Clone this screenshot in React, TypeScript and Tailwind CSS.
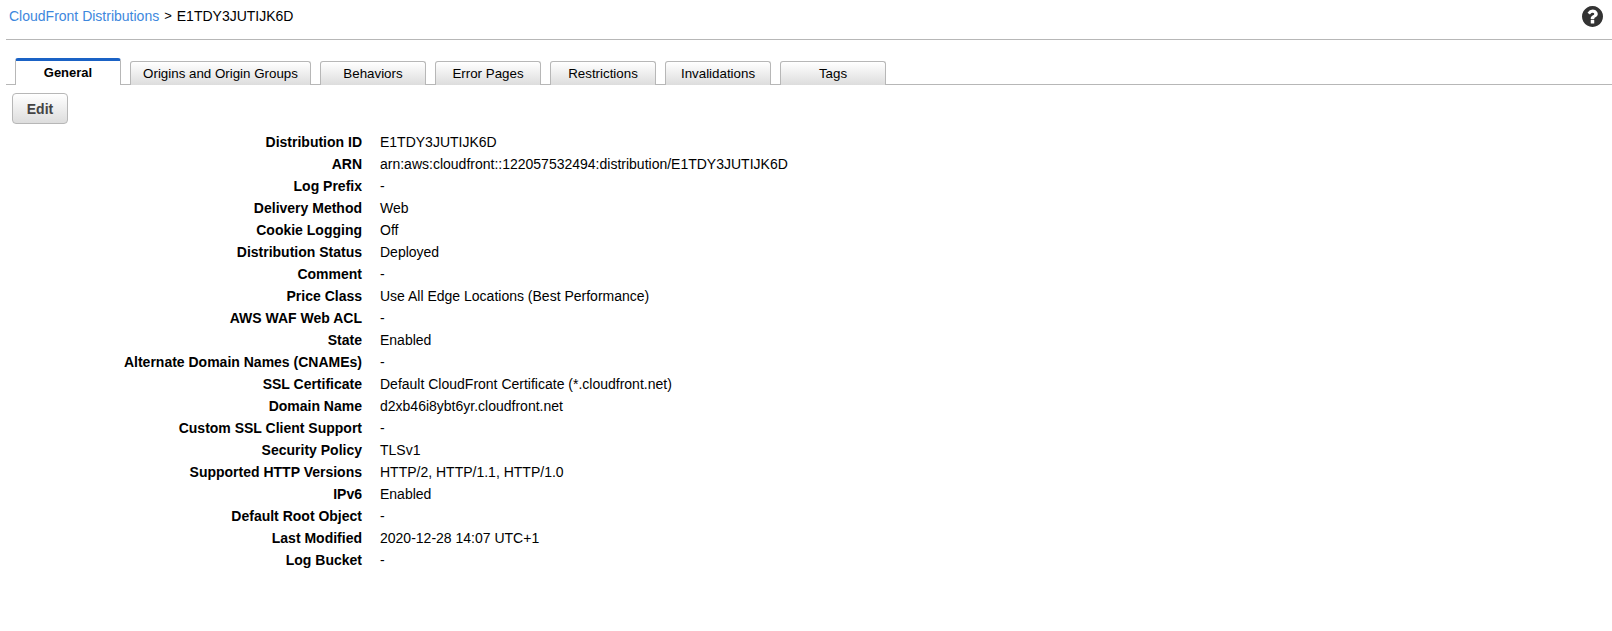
const tabs = ["Origins and Origin Groups", "Behaviors", "Error Pages", "Restrictions", "Invalidations", "Tags"];

const details: [string, string][] = [
  ["Distribution ID", "E1TDY3JUTIJK6D"],
  ["ARN", "arn:aws:cloudfront::122057532494:distribution/E1TDY3JUTIJK6D"],
  ["Log Prefix", "-"],
  ["Delivery Method", "Web"],
  ["Cookie Logging", "Off"],
  ["Distribution Status", "Deployed"],
  ["Comment", "-"],
  ["Price Class", "Use All Edge Locations (Best Performance)"],
  ["AWS WAF Web ACL", "-"],
  ["State", "Enabled"],
  ["Alternate Domain Names (CNAMEs)", "-"],
  ["SSL Certificate", "Default CloudFront Certificate (*.cloudfront.net)"],
  ["Domain Name", "d2xb46i8ybt6yr.cloudfront.net"],
  ["Custom SSL Client Support", "-"],
  ["Security Policy", "TLSv1"],
  ["Supported HTTP Versions", "HTTP/2, HTTP/1.1, HTTP/1.0"],
  ["IPv6", "Enabled"],
  ["Default Root Object", "-"],
  ["Last Modified", "2020-12-28 14:07 UTC+1"],
  ["Log Bucket", "-"],
];

function HelpIcon() {
  return (
    <svg viewBox="128 128 1536 1536" className="h-[21px] w-[21px]" fill="#333333">
      <path d="M1024 1376v-192q0-14-9-23t-23-9h-192q-14 0-23 9t-9 23v192q0 14 9 23t23 9h192q14 0 23-9t9-23zm256-672q0-88-55.5-163t-138.5-116-170-41q-243 0-371 213-15 24 8 42l132 100q7 6 19 6 16 0 25-12 53-68 86-92 34-24 86-24 48 0 85.5 26t37.5 59q0 38-20 61t-68 45q-63 28-115.5 86.5t-52.5 125.5v36q0 14 9 23t23 9h192q14 0 23-9t9-23q0-19 21.5-49.5t54.5-49.5q32-18 49-28.5t46-35 44.5-48 28-60.5 12.5-81zm384 192q0 209-103 385.5t-279.5 279.5-385.5 103-385.5-103-279.5-279.5-103-385.5 103-385.5 279.5-279.5 385.5-103 385.5 103 279.5 279.5 103 385.5z" />
    </svg>
  );
}

export default function App() {
  return (
    <div className="min-h-screen bg-white pl-1.5 font-['Liberation_Sans',Arial,sans-serif] text-sm text-black">
      <header className="flex h-10 items-start justify-between border-b border-[#b7b7b7] pr-[9px] pl-[3px]">
        <div className="flex gap-[5px] pt-1.5 leading-5">
          <a className="text-[#3d87dd]">CloudFront Distributions</a>
          <span className="text-[13px]">&gt;</span>
          <span>E1TDY3JUTIJK6D</span>
        </div>
        <button className="pt-1.5" aria-label="Help">
          <HelpIcon />
        </button>
      </header>

      <nav className="flex h-[45px] items-end text-[13px]">
        <span className="w-[9px] border-b border-[#b7b7b7]" />
        <button className="h-[27px] w-[106px] rounded-t-[3px] border-x border-t-[3px] border-x-[#b7b7b7] border-t-[#1a62c5] pb-px font-bold leading-5">
          General
        </button>
        {tabs.map((tab, i) => (
          <div key={tab} className="flex items-end">
            <span className="w-[9px] border-b border-[#b7b7b7]" />
            <button
              className={`${i === 0 ? "w-[181px]" : "w-[106px]"} h-6 rounded-t-[3px] border border-b-0 border-[#b7b7b7] bg-linear-to-b from-white to-[#dddddd] pt-px text-[13.333px] leading-[22px] whitespace-nowrap`}
            >
              {tab}
            </button>
          </div>
        ))}
        <span className="flex-1 border-b border-[#b7b7b7]" />
      </nav>

      <button className="mt-2 ml-1.5 block h-[31px] w-14 rounded-[4px] border border-[#b7b7b7] bg-linear-to-b from-white to-[#dddddd] font-bold text-[#444444]">
        Edit
      </button>

      <dl className="mt-[7px]">
        {details.map(([label, value]) => (
          <div key={label} className="flex h-[22px] items-center leading-[22px]">
            <dt className="w-[356px] text-right font-bold">{label}</dt>
            <dd className="ml-[18px]">{value}</dd>
          </div>
        ))}
      </dl>
    </div>
  );
}
